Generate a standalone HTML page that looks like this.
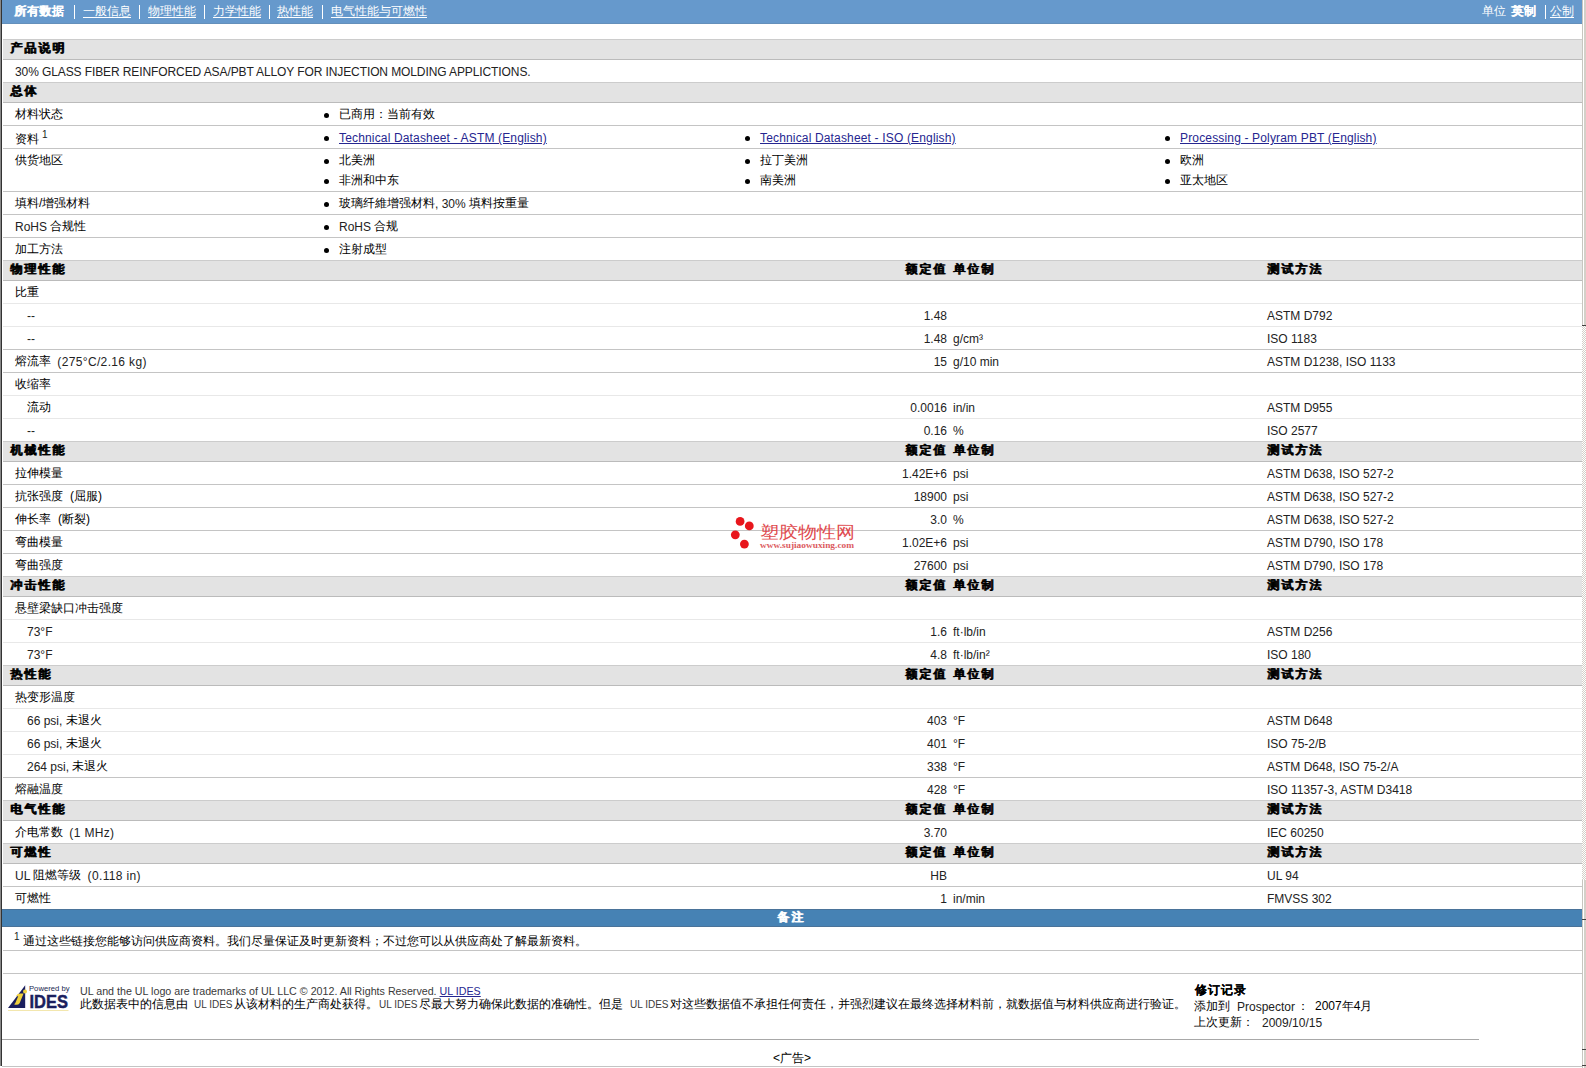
<!DOCTYPE html><html><head><meta charset="utf-8"><style>
*{margin:0;padding:0}
html,body{width:1586px;height:1068px;overflow:hidden;background:#fff}
body{position:relative;font-family:"Liberation Sans",sans-serif;font-size:12px;color:#000}
.t{position:absolute;white-space:nowrap;line-height:22px;height:22px}
.r{text-align:right}
.b{font-weight:bold}
.hdt{line-height:20px;height:20px;letter-spacing:2px;text-shadow:0.6px 0 0 #000}
.en{color:#222;margin-top:1px}
.e{position:relative;top:1px;color:#222}
.ln{position:absolute;height:1px}
.dk{background:#c4c4c4}
.lt{background:#e8e8e8}
.dk2{background:#a8a8a8}
.bt{background:#c4c4c4}
.hd{position:absolute;left:3px;width:1579px;height:19px;background:#e3e3e3;border-top:1px solid #cccccc;border-bottom:1px solid #bbbbbb}
.dot{position:absolute;width:5px;height:5px;border-radius:50%;background:#000}
a,.lk{color:#262690;text-decoration:underline;letter-spacing:0.16px}
.nav{position:absolute;left:2px;top:0;width:1580px;height:23px;background:#6699cc;border-bottom:1px solid #6490bb}
.nt{position:absolute;top:0;line-height:22px;color:#fff;white-space:nowrap}
.nt.u{text-decoration:underline;text-underline-offset:2px}
.nt.b{letter-spacing:0.6px;text-shadow:0.6px 0 0 #fff}
.sep{position:absolute;top:5px;width:1px;height:14px;background:#fff}
</style></head><body>
<div class="nav"></div>
<div class="nt b" style="left:14px">所有数据</div>
<div class="nt u" style="left:83px">一般信息</div>
<div class="nt u" style="left:148px">物理性能</div>
<div class="nt u" style="left:213px">力学性能</div>
<div class="nt u" style="left:277px">热性能</div>
<div class="nt u" style="left:331px">电气性能与可燃性</div>
<div class="nt " style="left:1482px">单位</div>
<div class="nt b" style="left:1511px">英制</div>
<div class="nt u" style="left:1550px">公制</div>
<div class="sep" style="left:74px"></div>
<div class="sep" style="left:139px"></div>
<div class="sep" style="left:204px"></div>
<div class="sep" style="left:269px"></div>
<div class="sep" style="left:322px"></div>
<div class="sep" style="left:1545px"></div>
<div class="hd" style="top:39px"></div>
<div class="t b hdt" style="left:10px;top:38px;">产品说明</div>
<div class="t en" style="left:16px;top:60px;letter-spacing:-0.1px;margin-left:-1px">30% GLASS FIBER REINFORCED ASA/PBT ALLOY FOR INJECTION MOLDING APPLICTIONS.</div>
<div class="hd" style="top:82px"></div>
<div class="t b hdt" style="left:10px;top:81px;">总体</div>
<div class="t rt" style="left:15px;top:103px;">材料状态</div>
<div class="ln dk" style="top:125px;left:3px;width:1579px"></div>
<div class="dot" style="left:324px;top:113px"></div>
<div class="t rt " style="left:339px;top:103px;">已商用：当前有效</div>
<div class="t rt" style="left:15px;top:126px;"><span style="position:relative;top:2px">资料</span></div>
<div class="ln dk" style="top:148px;left:3px;width:1579px"></div>
<div class="t" style="left:42px;top:129px;font-size:10px;line-height:12px;color:#222">1</div>
<div class="dot" style="left:324px;top:136px"></div>
<div class="t rt lk en" style="left:339px;top:126px;">Technical Datasheet - ASTM (English)</div>
<div class="dot" style="left:745px;top:136px"></div>
<div class="t rt lk en" style="left:760px;top:126px;">Technical Datasheet - ISO (English)</div>
<div class="dot" style="left:1165px;top:136px"></div>
<div class="t rt lk en" style="left:1180px;top:126px;">Processing - Polyram PBT (English)</div>
<div class="t rt" style="left:15px;top:149px;">供货地区</div>
<div class="ln dk" style="top:191px;left:3px;width:1579px"></div>
<div class="dot" style="left:324px;top:159px"></div>
<div class="t rt " style="left:339px;top:149px;">北美洲</div>
<div class="dot" style="left:745px;top:159px"></div>
<div class="t rt " style="left:760px;top:149px;">拉丁美洲</div>
<div class="dot" style="left:1165px;top:159px"></div>
<div class="t rt " style="left:1180px;top:149px;">欧洲</div>
<div class="dot" style="left:324px;top:179px"></div>
<div class="t rt " style="left:339px;top:169px;">非洲和中东</div>
<div class="dot" style="left:745px;top:179px"></div>
<div class="t rt " style="left:760px;top:169px;">南美洲</div>
<div class="dot" style="left:1165px;top:179px"></div>
<div class="t rt " style="left:1180px;top:169px;">亚太地区</div>
<div class="t rt" style="left:15px;top:192px;">填料/增强材料</div>
<div class="ln dk" style="top:214px;left:3px;width:1579px"></div>
<div class="dot" style="left:324px;top:202px"></div>
<div class="t rt " style="left:339px;top:192px;">玻璃纤維增强材料<span class="e">, 30%</span> 填料按重量</div>
<div class="t rt" style="left:15px;top:215px;"><span class="e">RoHS</span> 合规性</div>
<div class="ln dk" style="top:237px;left:3px;width:1579px"></div>
<div class="dot" style="left:324px;top:225px"></div>
<div class="t rt " style="left:339px;top:215px;"><span class="e">RoHS</span> 合规</div>
<div class="t rt" style="left:15px;top:238px;">加工方法</div>
<div class="dot" style="left:324px;top:248px"></div>
<div class="t rt " style="left:339px;top:238px;">注射成型</div>
<div class="hd" style="top:260px"></div>
<div class="t b hdt" style="left:10px;top:259px;">物理性能</div>
<div class="t b hdt" style="left:905px;top:259px;">额定值</div>
<div class="t b hdt" style="left:953px;top:259px;">单位制</div>
<div class="t b hdt" style="left:1267px;top:259px;">测试方法</div>
<div class="t rt" style="left:15px;top:281px;">比重</div>
<div class="ln lt" style="top:303px;left:3px;width:1579px"></div>
<div class="t rt" style="left:27px;top:304px;"><span class="e">--</span></div>
<div class="t r rt en" style="left:647px;width:300px;top:304px;">1.48</div>
<div class="t rt en" style="left:1267px;top:304px;">ASTM D792</div>
<div class="ln lt" style="top:326px;left:3px;width:1579px"></div>
<div class="t rt" style="left:27px;top:327px;"><span class="e">--</span></div>
<div class="t r rt en" style="left:647px;width:300px;top:327px;">1.48</div>
<div class="t rt en" style="left:953px;top:327px;">g/cm³</div>
<div class="t rt en" style="left:1267px;top:327px;">ISO 1183</div>
<div class="ln dk" style="top:349px;left:3px;width:1579px"></div>
<div class="t rt" style="left:15px;top:350px;">熔流率 <span class="e" style="margin-left:3px;letter-spacing:0.35px">(275°C/2.16 kg)</span></div>
<div class="t r rt en" style="left:647px;width:300px;top:350px;">15</div>
<div class="t rt en" style="left:953px;top:350px;">g/10 min</div>
<div class="t rt en" style="left:1267px;top:350px;">ASTM D1238, ISO 1133</div>
<div class="ln dk" style="top:372px;left:3px;width:1579px"></div>
<div class="t rt" style="left:15px;top:373px;">收缩率</div>
<div class="ln lt" style="top:395px;left:3px;width:1579px"></div>
<div class="t rt" style="left:27px;top:396px;">流动</div>
<div class="t r rt en" style="left:647px;width:300px;top:396px;">0.0016</div>
<div class="t rt en" style="left:953px;top:396px;">in/in</div>
<div class="t rt en" style="left:1267px;top:396px;">ASTM D955</div>
<div class="ln lt" style="top:418px;left:3px;width:1579px"></div>
<div class="t rt" style="left:27px;top:419px;"><span class="e">--</span></div>
<div class="t r rt en" style="left:647px;width:300px;top:419px;">0.16</div>
<div class="t rt en" style="left:953px;top:419px;">%</div>
<div class="t rt en" style="left:1267px;top:419px;">ISO 2577</div>
<div class="hd" style="top:441px"></div>
<div class="t b hdt" style="left:10px;top:440px;">机械性能</div>
<div class="t b hdt" style="left:905px;top:440px;">额定值</div>
<div class="t b hdt" style="left:953px;top:440px;">单位制</div>
<div class="t b hdt" style="left:1267px;top:440px;">测试方法</div>
<div class="t rt" style="left:15px;top:462px;">拉伸模量</div>
<div class="t r rt en" style="left:647px;width:300px;top:462px;">1.42E+6</div>
<div class="t rt en" style="left:953px;top:462px;">psi</div>
<div class="t rt en" style="left:1267px;top:462px;">ASTM D638, ISO 527-2</div>
<div class="ln dk" style="top:484px;left:3px;width:1579px"></div>
<div class="t rt" style="left:15px;top:485px;">抗张强度<span style="margin-left:7px">(</span>屈服)</div>
<div class="t r rt en" style="left:647px;width:300px;top:485px;">18900</div>
<div class="t rt en" style="left:953px;top:485px;">psi</div>
<div class="t rt en" style="left:1267px;top:485px;">ASTM D638, ISO 527-2</div>
<div class="ln dk" style="top:507px;left:3px;width:1579px"></div>
<div class="t rt" style="left:15px;top:508px;">伸长率<span style="margin-left:7px">(</span>断裂)</div>
<div class="t r rt en" style="left:647px;width:300px;top:508px;">3.0</div>
<div class="t rt en" style="left:953px;top:508px;">%</div>
<div class="t rt en" style="left:1267px;top:508px;">ASTM D638, ISO 527-2</div>
<div class="ln dk" style="top:530px;left:3px;width:1579px"></div>
<div class="t rt" style="left:15px;top:531px;">弯曲模量</div>
<div class="t r rt en" style="left:647px;width:300px;top:531px;">1.02E+6</div>
<div class="t rt en" style="left:953px;top:531px;">psi</div>
<div class="t rt en" style="left:1267px;top:531px;">ASTM D790, ISO 178</div>
<div class="ln dk" style="top:553px;left:3px;width:1579px"></div>
<div class="t rt" style="left:15px;top:554px;">弯曲强度</div>
<div class="t r rt en" style="left:647px;width:300px;top:554px;">27600</div>
<div class="t rt en" style="left:953px;top:554px;">psi</div>
<div class="t rt en" style="left:1267px;top:554px;">ASTM D790, ISO 178</div>
<div class="hd" style="top:576px"></div>
<div class="t b hdt" style="left:10px;top:575px;">冲击性能</div>
<div class="t b hdt" style="left:905px;top:575px;">额定值</div>
<div class="t b hdt" style="left:953px;top:575px;">单位制</div>
<div class="t b hdt" style="left:1267px;top:575px;">测试方法</div>
<div class="t rt" style="left:15px;top:597px;">悬壁梁缺口冲击强度</div>
<div class="ln lt" style="top:619px;left:3px;width:1579px"></div>
<div class="t rt" style="left:27px;top:620px;"><span class="e">73°F</span></div>
<div class="t r rt en" style="left:647px;width:300px;top:620px;">1.6</div>
<div class="t rt en" style="left:953px;top:620px;">ft·lb/in</div>
<div class="t rt en" style="left:1267px;top:620px;">ASTM D256</div>
<div class="ln lt" style="top:642px;left:3px;width:1579px"></div>
<div class="t rt" style="left:27px;top:643px;"><span class="e">73°F</span></div>
<div class="t r rt en" style="left:647px;width:300px;top:643px;">4.8</div>
<div class="t rt en" style="left:953px;top:643px;">ft·lb/in²</div>
<div class="t rt en" style="left:1267px;top:643px;">ISO 180</div>
<div class="hd" style="top:665px"></div>
<div class="t b hdt" style="left:10px;top:664px;">热性能</div>
<div class="t b hdt" style="left:905px;top:664px;">额定值</div>
<div class="t b hdt" style="left:953px;top:664px;">单位制</div>
<div class="t b hdt" style="left:1267px;top:664px;">测试方法</div>
<div class="t rt" style="left:15px;top:686px;">热变形温度</div>
<div class="ln lt" style="top:708px;left:3px;width:1579px"></div>
<div class="t rt" style="left:27px;top:709px;"><span class="e">66 psi,</span> 未退火</div>
<div class="t r rt en" style="left:647px;width:300px;top:709px;">403</div>
<div class="t rt en" style="left:953px;top:709px;">°F</div>
<div class="t rt en" style="left:1267px;top:709px;">ASTM D648</div>
<div class="ln lt" style="top:731px;left:3px;width:1579px"></div>
<div class="t rt" style="left:27px;top:732px;"><span class="e">66 psi,</span> 未退火</div>
<div class="t r rt en" style="left:647px;width:300px;top:732px;">401</div>
<div class="t rt en" style="left:953px;top:732px;">°F</div>
<div class="t rt en" style="left:1267px;top:732px;">ISO 75-2/B</div>
<div class="ln lt" style="top:754px;left:3px;width:1579px"></div>
<div class="t rt" style="left:27px;top:755px;"><span class="e">264 psi,</span> 未退火</div>
<div class="t r rt en" style="left:647px;width:300px;top:755px;">338</div>
<div class="t rt en" style="left:953px;top:755px;">°F</div>
<div class="t rt en" style="left:1267px;top:755px;">ASTM D648, ISO 75-2/A</div>
<div class="ln dk" style="top:777px;left:3px;width:1579px"></div>
<div class="t rt" style="left:15px;top:778px;">熔融温度</div>
<div class="t r rt en" style="left:647px;width:300px;top:778px;">428</div>
<div class="t rt en" style="left:953px;top:778px;">°F</div>
<div class="t rt en" style="left:1267px;top:778px;">ISO 11357-3, ASTM D3418</div>
<div class="hd" style="top:800px"></div>
<div class="t b hdt" style="left:10px;top:799px;">电气性能</div>
<div class="t b hdt" style="left:905px;top:799px;">额定值</div>
<div class="t b hdt" style="left:953px;top:799px;">单位制</div>
<div class="t b hdt" style="left:1267px;top:799px;">测试方法</div>
<div class="t rt" style="left:15px;top:821px;">介电常数 <span class="e" style="margin-left:3px;letter-spacing:0.35px">(1 MHz)</span></div>
<div class="t r rt en" style="left:647px;width:300px;top:821px;">3.70</div>
<div class="t rt en" style="left:1267px;top:821px;">IEC 60250</div>
<div class="hd" style="top:843px"></div>
<div class="t b hdt" style="left:10px;top:842px;">可燃性</div>
<div class="t b hdt" style="left:905px;top:842px;">额定值</div>
<div class="t b hdt" style="left:953px;top:842px;">单位制</div>
<div class="t b hdt" style="left:1267px;top:842px;">测试方法</div>
<div class="t rt" style="left:15px;top:864px;"><span class="e">UL</span> 阻燃等级 <span class="e" style="margin-left:3px;letter-spacing:0.35px">(0.118 in)</span></div>
<div class="t r rt en" style="left:647px;width:300px;top:864px;">HB</div>
<div class="t rt en" style="left:1267px;top:864px;">UL 94</div>
<div class="ln dk" style="top:886px;left:3px;width:1579px"></div>
<div class="t rt" style="left:15px;top:887px;">可燃性</div>
<div class="t r rt en" style="left:647px;width:300px;top:887px;">1</div>
<div class="t rt en" style="left:953px;top:887px;">in/min</div>
<div class="t rt en" style="left:1267px;top:887px;">FMVSS 302</div>
<div style="position:absolute;left:2px;top:909px;width:1580px;height:16px;background:#4682b4;border-top:1px solid #4a7399;border-bottom:1px solid #4a7399"></div>
<div class="t b" style="left:777px;top:906px;color:#fff;letter-spacing:2px;text-shadow:0.6px 0 0 #fff">备注</div>
<div class="t" style="left:14px;top:931px;font-size:10px;line-height:12px;color:#222">1</div>
<div class="t " style="left:23px;top:930px;">通过这些链接您能够访问供应商资料。我们尽量保证及时更新资料；不过您可以从供应商处了解最新资料。</div>
<div class="ln dk" style="top:950px;left:3px;width:1579px"></div>
<div class="ln dk" style="top:973px;left:3px;width:1579px"></div>
<div class="t en" style="left:80px;top:982px;font-size:10.7px;line-height:16px;color:#3a3a3a">UL and the UL logo are trademarks of UL LLC © 2012. All Rights Reserved. <span class="lk" style="letter-spacing:0">UL IDES</span></div>
<div class="t" style="left:80px;top:996px;line-height:16px">此数据表中的信息由</div>
<div class="t" style="left:234px;top:996px;line-height:16px">从该材料的生产商处获得。</div>
<div class="t" style="left:419px;top:996px;line-height:16px">尽最大努力确保此数据的准确性。但是</div>
<div class="t" style="left:670px;top:996px;line-height:16px">对这些数据值不承担任何责任，并强烈建议在最终选择材料前，就数据值与材料供应商进行验证。</div>
<div class="t en" style="left:194px;top:996px;line-height:16px;font-size:10px;color:#3a3a3a">UL IDES</div>
<div class="t en" style="left:379px;top:996px;line-height:16px;font-size:10px;color:#3a3a3a">UL IDES</div>
<div class="t en" style="left:630px;top:996px;line-height:16px;font-size:10px;color:#3a3a3a">UL IDES</div>
<div class="t b" style="left:1195px;top:982px;line-height:16px;letter-spacing:1px;text-shadow:0.4px 0 0 #000">修订记录</div>
<div class="t " style="left:1194px;top:998px;line-height:16px">添加到</div>
<div class="t en" style="left:1237px;top:998px;line-height:16px">Prospector</div>
<div class="t " style="left:1297px;top:998px;line-height:16px">：</div>
<div class="t " style="left:1315px;top:998px;line-height:16px">2007年4月</div>
<div class="t " style="left:1194px;top:1014px;line-height:16px">上次更新：</div>
<div class="t en" style="left:1262px;top:1014px;line-height:16px">2009/10/15</div>
<svg style="position:absolute;left:0;top:980px" width="80" height="34" viewBox="0 980 80 34">
<polygon points="8,1008 25.2,985.2 25.2,1008" fill="#1b1f5e"/>
<path d="M16.2,995.8 Q17.5,993.6 20.5,993.6 L23.6,993.6 L19.6,1003.2 Q18.5,1005 15.8,1004.8 L14.6,1004.8 Q13.8,1004 15.2,1003.2 L18.2,996.2 Q17.4,996.6 16.2,995.8 Z" fill="#f0d03c"/>
<circle cx="25.0" cy="991.4" r="2.0" fill="#f0d03c"/>
<text x="29" y="991" font-family="Liberation Sans" font-size="8" fill="#202850" textLength="40.5" lengthAdjust="spacingAndGlyphs">Powered by</text>
<text x="29.5" y="1007.8" font-family="Liberation Sans" font-weight="bold" font-size="19" fill="#1b1f5e" stroke="#1b1f5e" stroke-width="0.5" textLength="38.4" lengthAdjust="spacingAndGlyphs">IDES</text>
<rect x="8" y="1010" width="60.5" height="1" fill="#f3e7ae"/>
</svg>
<svg style="position:absolute;left:725px;top:512px" width="140" height="40" viewBox="725 512 140 40">
<circle cx="740.1" cy="521.4" r="4.4" fill="#e8161c"/>
<circle cx="749.3" cy="525.9" r="4.4" fill="#e8161c"/>
<circle cx="735.3" cy="534.8" r="4.4" fill="#e8161c"/>
<circle cx="744.4" cy="544.1" r="4.4" fill="#e8161c"/>
</svg>
<svg style="position:absolute;left:755px;top:515px" width="110" height="40" viewBox="755 515 110 40">
<text x="759.5" y="537.6" font-family="Liberation Sans" font-size="16.5" fill="#e04a4e" textLength="95" lengthAdjust="spacingAndGlyphs">塑胶物性网</text>
<text x="760" y="547.6" font-family="Liberation Serif" font-weight="bold" font-size="8.6" fill="#dc5a5e" textLength="94" lengthAdjust="spacingAndGlyphs">www.sujiaowuxing.com</text>
</svg>
<div class="ln dk2" style="top:1039px;left:2px;width:1477px"></div>
<div class="t" style="left:773px;top:1047px">&lt;广告&gt;</div>
<div class="ln bt" style="top:1066px;left:2px;width:1580px"></div>
<div style="position:absolute;left:0;top:0;width:1px;height:1066px;background:#888"></div>
<div style="position:absolute;left:1px;top:0;width:1px;height:1066px;background:#333"></div>
<div style="position:absolute;left:1582px;top:0;width:1px;height:1068px;background:#c8c6c0"></div>
<div style="position:absolute;left:1583px;top:0;width:1px;height:1068px;background:#fff"></div>
<div style="position:absolute;left:1584px;top:0;width:2px;height:1068px;background:#d4d0c8"></div>
<div style="position:absolute;left:1582px;top:326px;width:4px;height:554px;background:repeating-conic-gradient(#d4d0c8 0 25%,#fff 0 50%) 0 0/2px 2px"></div>
<div style="position:absolute;left:1582px;top:325px;width:4px;height:1px;background:#404040"></div>
<div style="position:absolute;left:1582px;top:919px;width:4px;height:1px;background:#404040"></div>
<div style="position:absolute;left:1582px;top:1049px;width:4px;height:1px;background:#404040"></div>
<div style="position:absolute;left:1582px;top:1065px;width:4px;height:1px;background:#404040"></div>
</body></html>
